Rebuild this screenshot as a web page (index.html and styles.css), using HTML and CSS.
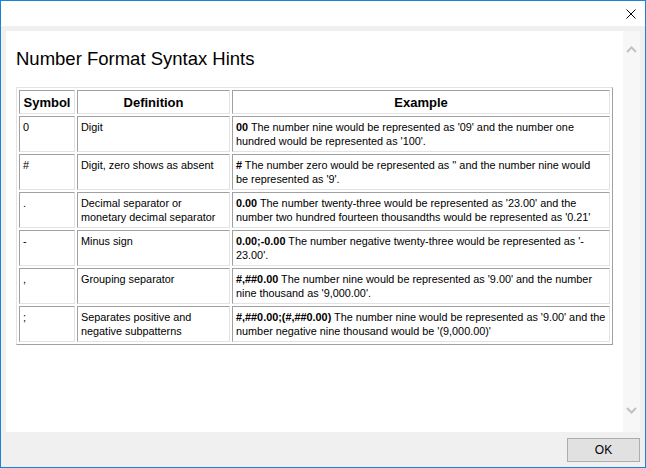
FILE: index.html
```html
<!DOCTYPE html>
<html>
<head>
<meta charset="utf-8">
<link rel="stylesheet" href="styles.css">
</head>
<body>
<div class="window">
  <div class="titlebar">
    <div class="close">
      <svg width="10" height="10" viewBox="0 0 10 10"><path d="M0.5 0.5L9.5 9.5M9.5 0.5L0.5 9.5" stroke="#000" stroke-width="1" fill="none"/></svg>
    </div>
  </div>
  <div class="client">
    <div class="panel">
      <div class="content">
        <h1 class="title">Number Format Syntax Hints</h1>
        <table class="hints">
          <colgroup><col class="c-sym"><col class="c-def"><col class="c-ex"></colgroup>
          <thead>
            <tr><th>Symbol</th><th>Definition</th><th>Example</th></tr>
          </thead>
          <tbody>
            <tr><td>0</td><td>Digit</td><td><b>00</b> The number nine would be represented as '09' and the number one<br>hundred would be represented as '100'.</td></tr>
            <tr><td>#</td><td>Digit, zero shows as absent</td><td><b>#</b> The number zero would be represented as '' and the number nine would<br>be represented as '9'.</td></tr>
            <tr><td>.</td><td>Decimal separator or<br>monetary decimal separator</td><td><b>0.00</b> The number twenty-three would be represented as '23.00' and the<br>number two hundred fourteen thousandths would be represented as '0.21'</td></tr>
            <tr><td>-</td><td>Minus sign</td><td><b>0.00;-0.00</b> The number negative twenty-three would be represented as '-<br>23.00'.</td></tr>
            <tr><td>,</td><td>Grouping separator</td><td><b>#,##0.00</b> The number nine would be represented as '9.00' and the number<br>nine thousand as '9,000.00'.</td></tr>
            <tr><td>;</td><td>Separates positive and<br>negative subpatterns</td><td><b>#,##0.00;(#,##0.00)</b> The number nine would be represented as '9.00' and the<br>number negative nine thousand would be '(9,000.00)'</td></tr>
          </tbody>
        </table>
      </div>
      <div class="scrollbar">
        <svg class="arrow" width="17" height="17" viewBox="0 0 17 17"><path d="M4 11L8.5 6.5L13 11" stroke="#c2c2c2" stroke-width="2" fill="none"/></svg>
        <svg class="arrow" width="17" height="17" viewBox="0 0 17 17"><path d="M4 6L8.5 10.5L13 6" stroke="#c2c2c2" stroke-width="2" fill="none"/></svg>
      </div>
    </div>
    <div class="footer">
      <button class="ok">OK</button>
    </div>
  </div>
</div>
</body>
</html>
```

FILE: styles.css
```css
html, body {
  margin: 0;
  padding: 0;
  width: 646px;
  height: 468px;
  overflow: hidden;
  background: #f0f0f0;
}

.window {
  box-sizing: border-box;
  width: 646px;
  height: 468px;
  border: 1px solid #1883d7;
  display: flex;
  flex-direction: column;
  background: #f0f0f0;
  font-family: "Liberation Sans", Arial, sans-serif;
  color: #000;
}

.titlebar {
  height: 25px;
  flex: none;
  background: #fff;
  display: flex;
  justify-content: flex-end;
  align-items: center;
}

.close {
  width: 29px;
  height: 25px;
  display: flex;
  align-items: center;
  justify-content: center;
}

.close svg {
  display: block;
}

.client {
  flex: 1;
  display: flex;
  flex-direction: column;
  padding: 5px 5px 0 5px;
}

.panel {
  height: 401px;
  flex: none;
  display: flex;
  background: #fff;
}

.content {
  flex: 1;
  padding: 17px 0 0 10px;
}

.title {
  margin: 0 0 18px 0;
  font-size: 18.5px;
  line-height: 21px;
  font-weight: normal;
}

.hints {
  table-layout: fixed;
  width: 597px;
  border-collapse: separate;
  border-spacing: 2px;
  border: 1px solid;
  border-color: #e3e3e3 #a0a0a0 #a0a0a0 #e3e3e3;
}

.c-sym { width: 56px; }
.c-def { width: 153px; }
.c-ex { width: 378px; }

.hints th,
.hints td {
  box-sizing: border-box;
  border: 1px solid;
  border-color: #a0a0a0 #e3e3e3 #e3e3e3 #a0a0a0;
  white-space: nowrap;
  overflow: visible;
}

.hints th {
  font-size: 13px;
  font-weight: bold;
  line-height: 15px;
  padding: 4px 2px 3px;
  text-align: center;
}

.hints td {
  font-size: 10.85px;
  line-height: 14px;
  padding: 3px 3px 3px 3px;
  vertical-align: top;
  text-align: left;
}

.scrollbar {
  width: 17px;
  flex: none;
  background: #f7f7f7;
  display: flex;
  flex-direction: column;
  justify-content: space-between;
  padding: 10px 0 13px;
}

.arrow {
  display: block;
}

.footer {
  height: 35px;
  flex: none;
  display: flex;
  justify-content: flex-end;
  align-items: flex-start;
}

.ok {
  box-sizing: border-box;
  width: 73px;
  height: 24px;
  margin-top: 6px;
  padding: 0;
  background: #e1e1e1;
  border: 1px solid #adadad;
  font-family: "Liberation Sans", Arial, sans-serif;
  font-size: 12px;
  color: #000;
}
```
